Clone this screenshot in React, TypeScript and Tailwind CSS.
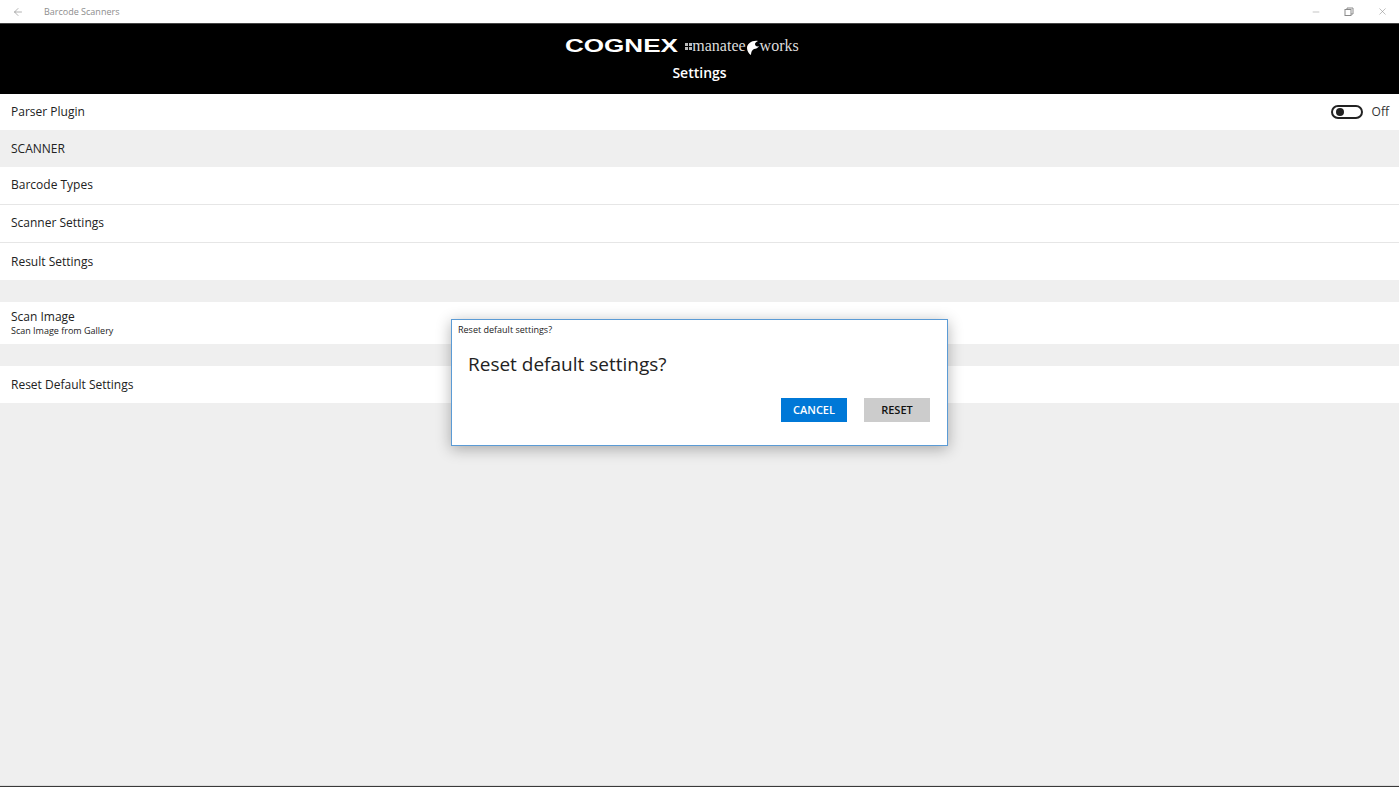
import { ArrowLeft, Minus, X } from "lucide-react";

const font = { fontFamily: '"Open Sans", "Noto Sans", sans-serif' };

function Row({ label, sub }: { label: string; sub?: string }) {
  return (
    <div className="flex h-[38px] flex-col justify-center border-b border-[#e6e6e6] bg-white pb-[1px] pl-[11px]">
      <span className="text-[12px] leading-[16px] text-[#222]">{label}</span>
      {sub && <span className="text-[9px] text-[#222]">{sub}</span>}
    </div>
  );
}

function Spacer() {
  return <div className="h-[22px] bg-[#efefef]" />;
}

function TitleBar() {
  return (
    <div className="flex h-[24px] items-center border-b border-[#444] bg-white">
      <ArrowLeft className="ml-[12px] h-[12px] w-[12px] text-[#8a8a8a]" strokeWidth={1.3} />
      <span className="ml-[20px] text-[9px] text-[#8d8d8d]">Barcode Scanners</span>
      <div className="ml-auto flex items-center gap-[23px] pr-[11px] text-[#8a8a8a]">
        <Minus className="h-[10px] w-[10px]" strokeWidth={1.2} />
        <svg width="10" height="10" viewBox="0 0 10 10" fill="none" stroke="currentColor" strokeWidth="1">
          <rect x="1" y="2.5" width="6" height="6" />
          <path d="M3 2.5V1h6v6H7" />
        </svg>
        <X className="h-[11px] w-[11px]" strokeWidth={1.2} />
      </div>
    </div>
  );
}

function Logo() {
  return (
    <div className="flex h-[20px] items-center justify-center text-white">
      <span
        className="origin-right scale-x-[1.45] text-[18px] leading-none font-bold"
        style={{ fontFamily: '"Liberation Sans", sans-serif' }}
      >
        COGNEX
      </span>
      <div className="ml-[7px] grid grid-cols-2 gap-[1px]">
        <div className="h-[3px] w-[3px] bg-[#bbb]" />
        <div className="h-[3px] w-[3px] bg-[#bbb]" />
        <div className="h-[3px] w-[3px] bg-[#bbb]" />
        <div className="h-[3px] w-[3px] bg-[#bbb]" />
      </div>
      <div
        className="flex items-center text-[16px] leading-none text-[#ddd]"
        style={{ fontFamily: '"Liberation Serif", serif' }}
      >
        <span>manatee</span>
        <svg width="14" height="16" viewBox="0 0 14 16" className="mt-[3px]">
          <path d="M12 1C6 0 1 4 1 8c0 3 2 6 4 7 0-3 1-5 3-6 2 0 4-1 5-3-2 1-4 0-4-2 0-1 1-2 3-3z" fill="#fff" />
        </svg>
        <span>works</span>
      </div>
    </div>
  );
}

function Dialog() {
  return (
    <div className="absolute top-[319px] left-[451px] h-[127px] w-[497px] border border-[#5b9bd5] bg-white shadow-[0_3px_14px_rgba(0,0,0,0.3)]">
      <div className="pt-[3px] pl-[6px] text-[9px] leading-[14px] text-[#222]">Reset default settings?</div>
      <div className="mt-[14px] pl-[16px] text-[19px] leading-[26px] text-[#222]">Reset default settings?</div>
      <div className="mt-[21px] flex justify-end gap-[17px] pr-[17px]">
        <button className="h-[24px] w-[66px] bg-[#0078d7] text-[11px] font-semibold text-white">CANCEL</button>
        <button className="h-[24px] w-[66px] bg-[#cccccc] text-[11px] font-semibold text-[#111]">RESET</button>
      </div>
    </div>
  );
}

export default function App() {
  return (
    <div className="relative flex h-[787px] flex-col overflow-hidden bg-[#efefef]" style={font}>
      <TitleBar />
      <div className="flex h-[70px] flex-col items-center bg-black pt-[12px]">
        <Logo />
        <div className="mt-[6px] text-[14px] font-semibold text-white">Settings</div>
      </div>
      <div className="flex h-[36px] items-center justify-between bg-white pr-[10px] pl-[11px]">
        <span className="text-[12px] text-[#222]">Parser Plugin</span>
        <div className="flex items-center gap-[9px]">
          <div className="flex h-[14px] w-[32px] items-center rounded-full border-2 border-[#222] pl-[3px]">
            <div className="h-[8px] w-[8px] rounded-full bg-[#222]" />
          </div>
          <span className="text-[12px] text-[#333]">Off</span>
        </div>
      </div>
      <div className="flex h-[37px] items-center pl-[11px] text-[12px] text-[#222]">SCANNER</div>
      <Row label="Barcode Types" />
      <Row label="Scanner Settings" />
      <div className="flex h-[37px] items-center bg-white pl-[11px] text-[12px] text-[#222]">Result Settings</div>
      <Spacer />
      <div className="flex h-[42px] flex-col justify-center bg-white pl-[11px]">
        <span className="text-[12px] leading-[15px] text-[#222]">Scan Image</span>
        <span className="text-[9px] leading-[13px] text-[#222]">Scan Image from Gallery</span>
      </div>
      <Spacer />
      <div className="flex h-[37px] items-center bg-white pl-[11px] text-[12px] text-[#222]">Reset Default Settings</div>
      <div className="flex-1" />
      <div className="h-[2px] border-t border-[#ddd] bg-[#3a3a3a]" />
      <Dialog />
    </div>
  );
}
